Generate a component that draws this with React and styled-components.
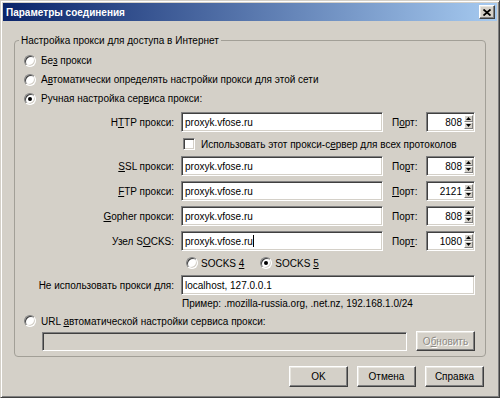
import React from 'react';
import styled, { createGlobalStyle, css } from 'styled-components';

const Global = createGlobalStyle`
  html, body { margin: 0; padding: 0; background: #d4d0c8; }
  body { font-family: "Liberation Sans", Arial, sans-serif; font-size: 10px; color: #000; }
`;

const raised = css`
  border: 1px solid;
  border-color: #fff #404040 #404040 #fff;
  box-shadow: inset -1px -1px #808080, inset 1px 1px #e8e6e0;
`;

const sunken = css`
  border: 1px solid;
  border-color: #808080 #fff #fff #808080;
  box-shadow: inset 1px 1px #404040, inset -1px -1px #d4d0c8;
`;

const Window = styled.div`
  box-sizing: border-box;
  width: 500px;
  height: 398px;
  background: #d4d0c8;
  border: 1px solid;
  border-color: #d4d0c8 #404040 #404040 #d4d0c8;
  box-shadow: inset 1px 1px #fff, inset -1px -1px #808080;
  padding: 2px;
  display: flex;
  flex-direction: column;
`;

const TitleBar = styled.div`
  height: 18px;
  display: flex;
  align-items: center;
  justify-content: space-between;
  background: linear-gradient(to right, #0a246a, #a6caf0);
  padding: 0 2px 0 3px;
`;

const Title = styled.span`
  color: #fff;
  font-weight: bold;
  font-size: 10px;
  padding-top: 1px;
`;

const CloseBtn = styled.div`
  box-sizing: border-box;
  width: 16px;
  height: 14px;
  background: #d4d0c8;
  ${raised};
  display: flex;
  align-items: center;
  justify-content: center;
`;

const Body = styled.div`
  padding: 0 11px;
  display: flex;
  flex-direction: column;
`;

const Group = styled.fieldset`
  box-sizing: border-box;
  margin: 13px 0 0;
  min-width: 0;
  border: 1px solid #a29f97;
  border-radius: 4px;
  padding: 4px 10px 5px 9px;
  display: flex;
  flex-direction: column;
`;

const Legend = styled.legend`
  padding: 0 2px;
  margin-left: -5px;
  line-height: 13px;
`;

const RadioRow = styled.div`
  display: flex;
  align-items: center;
  gap: 5px;
  height: ${p => p.$h || 19}px;
  margin-top: ${p => p.$mt || 0}px;
`;

const RadioDot = styled.span`
  box-sizing: border-box;
  flex: none;
  width: 12px;
  height: 12px;
  border-radius: 50%;
  background: #fff;
  border: 1px solid;
  border-color: #808080 #fff #fff #808080;
  box-shadow: inset 1px 1px #404040, inset -1px -1px #d4d0c8;
  position: relative;
  ${p => p.$checked && css`
    &::after {
      content: '';
      position: absolute;
      left: 3px;
      top: 3px;
      width: 4px;
      height: 4px;
      border-radius: 50%;
      background: #000;
    }
  `}
`;

const Key = styled.span`
  text-decoration: underline;
`;

const ProxyGrid = styled.div`
  display: grid;
  grid-template-columns: 157px 211px 34px 49px;
  row-gap: 5px;
  align-items: center;
  margin-top: 4px;
`;

const RowLabel = styled.span`
  text-align: right;
  padding-right: 7px;
  white-space: nowrap;
`;

const PortLabel = styled.span`
  white-space: nowrap;
`;

const Field = styled.div`
  box-sizing: border-box;
  width: ${p => p.$w ? `${p.$w}px` : '100%'};
  height: ${p => p.$h || 20}px;
  background: ${p => p.$disabled ? '#d4d0c8' : '#fff'};
  ${sunken};
  padding: 0 3px;
  display: flex;
  align-items: center;
  white-space: nowrap;
  ${p => p.$span && css`grid-column: 2 / -1;`}
  ${p => p.$grow && css`flex: 1;`}
`;

const Caret = styled.span`
  display: inline-block;
  width: 1px;
  height: 12px;
  background: #000;
`;

const Spin = styled.div`
  box-sizing: border-box;
  width: 49px;
  height: 20px;
  background: #fff;
  ${sunken};
  display: flex;
  padding: 2px 1px 2px 2px;
`;

const SpinValue = styled.div`
  flex: 1;
  text-align: right;
  padding-right: 2px;
  line-height: 16px;
`;

const SpinBtns = styled.div`
  width: 9px;
  display: flex;
  flex-direction: column;
`;

const SpinBtn = styled.div`
  box-sizing: border-box;
  flex: 1;
  background: #d4d0c8;
  border: 1px solid;
  border-color: #fff #808080 #808080 #fff;
  display: flex;
  align-items: center;
  justify-content: center;
`;

const CheckRow = styled.div`
  grid-column: 2 / -1;
  display: flex;
  align-items: center;
  gap: 6px;
  padding-left: 2px;
  height: 14px;
`;

const CheckBox = styled.span`
  box-sizing: border-box;
  width: 12px;
  height: 12px;
  background: #fff;
  ${sunken};
`;

const SocksRow = styled.div`
  grid-column: 2 / -1;
  display: flex;
  align-items: center;
  gap: 16px;
  padding-left: 5px;
  height: 14px;
`;

const SocksOpt = styled.span`
  display: flex;
  align-items: center;
  gap: 3px;
`;

const Hint = styled.div`
  margin: 2px 0 0 158px;
  line-height: 13px;
`;

const UrlRow = styled.div`
  display: flex;
  align-items: center;
  gap: 9px;
  padding-left: 18px;
  margin-top: 2px;
  height: 20px;
`;

const Button = styled.div`
  box-sizing: border-box;
  width: 59px;
  height: ${p => p.$h || 21}px;
  background: #d4d0c8;
  ${raised};
  display: flex;
  align-items: center;
  justify-content: center;
  flex: none;
  ${p => p.$disabled && css`
    color: #8d8a84;
    text-shadow: 1px 1px #fff;
  `}
`;

const ButtonBar = styled.div`
  display: flex;
  justify-content: flex-end;
  gap: 9px;
  margin-top: 9px;
  padding-right: 2px;
`;

const Up = () => (
  <svg width="5" height="3" viewBox="0 0 5 3"><path d="M2.5 0 L5 3 L0 3 Z" fill="#000" /></svg>
);
const Down = () => (
  <svg width="5" height="3" viewBox="0 0 5 3"><path d="M0 0 L5 0 L2.5 3 Z" fill="#000" /></svg>
);

const Spinner = ({ value }) => (
  <Spin>
    <SpinValue>{value}</SpinValue>
    <SpinBtns>
      <SpinBtn><Up /></SpinBtn>
      <SpinBtn><Down /></SpinBtn>
    </SpinBtns>
  </Spin>
);

const rows = [
  { label: <>Н<Key>Т</Key>ТР прокси:</>, port: <>П<Key>о</Key>рт:</>, value: '808' },
  { label: <><Key>S</Key>SL прокси:</>, port: <>По<Key>р</Key>т:</>, value: '808' },
  { label: <><Key>F</Key>TP прокси:</>, port: <><Key>П</Key>орт:</>, value: '2121' },
  { label: <><Key>G</Key>opher прокси:</>, port: <>Порт:</>, value: '808' },
  { label: <>Узел S<Key>O</Key>CKS:</>, port: <>Пор<Key>т</Key>:</>, value: '1080', caret: true },
];

const ProxyRow = ({ row }) => (
  <>
    <RowLabel>{row.label}</RowLabel>
    <Field $w={202}>proxyk.vfose.ru{row.caret && <Caret />}</Field>
    <PortLabel>{row.port}</PortLabel>
    <Spinner value={row.value} />
  </>
);

export default function App() {
  return (
    <>
      <Global />
      <Window>
        <TitleBar>
          <Title>Параметры соединения</Title>
          <CloseBtn>
            <svg width="8" height="7" viewBox="0 0 8 7">
              <path d="M0.5 0.5 L7.5 6.5 M7.5 0.5 L0.5 6.5" stroke="#000" strokeWidth="1.8" />
            </svg>
          </CloseBtn>
        </TitleBar>
        <Body>
          <Group>
            <Legend>Настройка прокси для доступа в Интернет</Legend>
            <RadioRow><RadioDot /><span>Бе<Key>з</Key> прокси</span></RadioRow>
            <RadioRow><RadioDot /><span>А<Key>в</Key>томатически определять настройки прокси для этой сети</span></RadioRow>
            <RadioRow><RadioDot $checked /><span>Ручная настройка сер<Key>в</Key>иса прокси:</span></RadioRow>
            <ProxyGrid>
              <ProxyRow row={rows[0]} />
              <CheckRow>
                <CheckBox />
                <span>Использовать этот прокси-с<Key>е</Key>рвер для всех протоколов</span>
              </CheckRow>
              {rows.slice(1).map((r, i) => <ProxyRow key={i} row={r} />)}
              <SocksRow>
                <SocksOpt><RadioDot /><span>SOCKS <Key>4</Key></span></SocksOpt>
                <SocksOpt><RadioDot $checked /><span>SOCKS <Key>5</Key></span></SocksOpt>
              </SocksRow>
              <RowLabel>Не использовать прокси <Key>д</Key>ля:</RowLabel>
              <Field $span>localhost, 127.0.0.1</Field>
            </ProxyGrid>
            <Hint>Пример: .mozilla-russia.org, .net.nz, 192.168.1.0/24</Hint>
            <RadioRow $h={16} $mt={3}><RadioDot /><span>URL <Key>а</Key>втоматической настройки сервиса прокси:</span></RadioRow>
            <UrlRow>
              <Field $grow $disabled $h={19} />
              <Button $disabled $h={20}>О<Key>б</Key>новить</Button>
            </UrlRow>
          </Group>
          <ButtonBar>
            <Button>OK</Button>
            <Button>Отмена</Button>
            <Button>Справка</Button>
          </ButtonBar>
        </Body>
      </Window>
    </>
  );
}
